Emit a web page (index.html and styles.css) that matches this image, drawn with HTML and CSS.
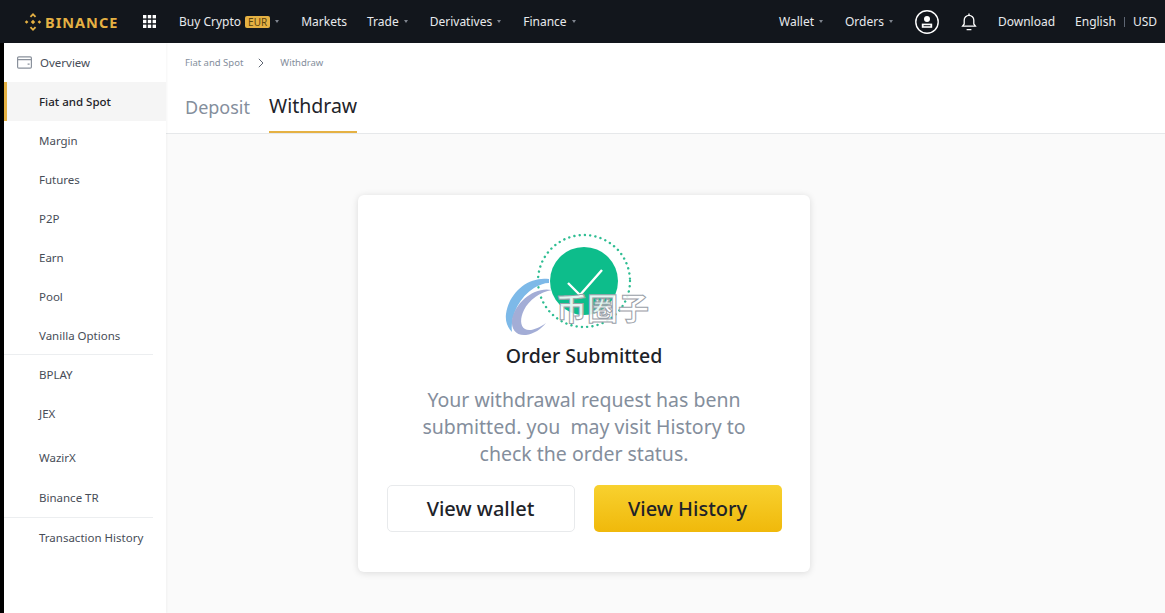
FILE: index.html
```html
<!DOCTYPE html>
<html lang="en">
<head>
<meta charset="utf-8">
<title>Binance - Withdraw</title>
<link rel="stylesheet" href="styles.css">
</head>
<body>
<header class="topbar">
  <a class="logo">
    <svg class="logo-mark" viewBox="0 0 20 20" width="20" height="20"><g fill="#e5b143"><path d="M10 1 13.2 4.2 11.9 5.5 10 3.6 8.1 5.5 6.8 4.2Z"/><path d="M10 19 13.2 15.8 11.9 14.5 10 16.4 8.1 14.5 6.8 15.8Z"/><path d="M3.6 8.2 5.4 10 3.6 11.8 1.8 10Z"/><path d="M16.4 8.2 18.2 10 16.4 11.8 14.6 10Z"/><path d="M10 7.8 12.2 10 10 12.2 7.8 10Z"/></g></svg>
    <span class="logo-text">BINANCE</span>
  </a>
  <svg class="apps" viewBox="0 0 13 13" width="13" height="13"><g fill="#fff"><rect width="3.4" height="3.4"/><rect x="4.8" width="3.4" height="3.4"/><rect x="9.6" width="3.4" height="3.4"/><rect y="4.8" width="3.4" height="3.4"/><rect x="4.8" y="4.8" width="3.4" height="3.4"/><rect x="9.6" y="4.8" width="3.4" height="3.4"/><rect y="9.6" width="3.4" height="3.4"/><rect x="4.8" y="9.6" width="3.4" height="3.4"/><rect x="9.6" y="9.6" width="3.4" height="3.4"/></g></svg>
  <nav class="nav nav-left">
    <a class="nav-item buy">Buy Crypto <span class="badge">EUR</span><i class="caret"></i></a>
    <a class="nav-item markets">Markets</a>
    <a class="nav-item trade">Trade<i class="caret"></i></a>
    <a class="nav-item derivs">Derivatives<i class="caret"></i></a>
    <a class="nav-item">Finance<i class="caret"></i></a>
  </nav>
  <nav class="nav nav-right">
    <a class="nav-item wallet">Wallet<i class="caret"></i></a>
    <a class="nav-item orders">Orders<i class="caret"></i></a>
    <svg class="user" viewBox="0 0 24 24" width="24" height="24" fill="none"><circle cx="12" cy="12" r="11.2" stroke="#fff" stroke-width="1.4"/><circle cx="12" cy="9" r="3" fill="#fff"/><path d="M6.8 13.6h10.4v4.2H6.8z" fill="#fff"/><path d="M8.6 15.2h6.8v1H8.6z" fill="#12161c"/></svg>
    <svg class="bell" viewBox="0 0 16 18" width="16" height="18" fill="none" stroke="#fff" stroke-width="1.3"><path d="M1.6 13.2h12.8l-1.6-2.2V7.2a4.8 4.8 0 0 0-9.6 0V11z"/><path d="M8 .6v1.6M5.6 16.6h4.8"/></svg>
    <a class="nav-item download">Download</a>
    <a class="nav-item lang">English</a>
    <span class="sep"></span>
    <a class="nav-item usd">USD</a>
  </nav>
</header>
<div class="shell">
  <aside class="sidebar">
    <ul class="menu">
      <li class="menu-item overview">
        <svg class="wallet-icon" viewBox="0 0 15 13" width="15" height="13" fill="none" stroke="#8a919c" stroke-width="1.2"><rect x=".6" y=".8" width="13.8" height="11.4" rx="1.2"/><path d="M.6 3.6h13.8M10.6 8.2h2"/></svg>
        Overview
      </li>
      <li class="menu-item active">Fiat and Spot</li>
      <li class="menu-item">Margin</li>
      <li class="menu-item">Futures</li>
      <li class="menu-item">P2P</li>
      <li class="menu-item">Earn</li>
      <li class="menu-item">Pool</li>
      <li class="menu-item ruled">Vanilla Options</li>
      <li class="menu-item">BPLAY</li>
      <li class="menu-item">JEX</li>
      <li class="menu-item wazirx">WazirX</li>
      <li class="menu-item ruled tr">Binance TR</li>
      <li class="menu-item tx">Transaction History</li>
    </ul>
  </aside>
  <main class="main">
    <section class="page-head">
      <div class="crumbs"><span>Fiat and Spot</span><svg class="chev" viewBox="0 0 6 10" width="6" height="10" fill="none" stroke="#5e6673" stroke-width="1"><path d="M.8.8 5 5 .8 9.2"/></svg><span>Withdraw</span></div>
      <div class="tabs">
        <a class="tab">Deposit</a>
        <a class="tab tab-on">Withdraw</a>
      </div>
    </section>
    <section class="stage">
      <div class="card">
        <div class="result-icon">
          <svg viewBox="0 0 96 96" width="96" height="96"><circle cx="48" cy="48" r="46" fill="none" stroke="#2ebd92" stroke-width="2.4" stroke-dasharray="0.1 5.2" stroke-linecap="round"/><circle cx="48" cy="48" r="34" fill="#0dbd8b"/><path d="M32 50 44 62 66 37" fill="none" stroke="#fff" stroke-width="2.4"/></svg>
        </div>
        <h2 class="card-title">Order Submitted</h2>
        <p class="card-text">Your withdrawal request has benn submitted. you&nbsp; may visit History to check the order status.</p>
        <div class="actions">
          <button class="btn btn-ghost">View wallet</button>
          <button class="btn btn-gold">View History</button>
        </div>
        <div class="watermark">
          <svg viewBox="0 0 50 58" width="50" height="58" fill="none"><path d="M44 1C24-2 4 14 1 36c-1 8 2 14 6 18-2-14 6-34 22-44 5-3 10-5 15-5z" fill="#7db9e8"/><path d="M47 12C30 8 10 24 7 42c-1 9 4 16 14 15 8-1 15-6 20-12-7 5-16 9-21 6-5-3-5-11-1-19 5-10 16-18 28-20z" fill="#a3add6"/></svg>
          <span class="wm-text">币圈子</span>
        </div>
      </div>
    </section>
  </main>
</div>
</body>
</html>
```
FILE: styles.css
```css
* { box-sizing: border-box; }
html, body { margin: 0; height: 100%; overflow: hidden; }
body {
  background: #000;
  font-family: "Noto Sans", "Noto Sans CJK SC", sans-serif;
  color: #1e2329;
  display: flex;
  flex-direction: column;
  width: 1165px;
  height: 613px;
}
ul { list-style: none; margin: 0; padding: 0; }

.topbar {
  height: 43px;
  flex: none;
  background: #12161c;
  display: flex;
  align-items: center;
  padding-left: 23px;
  padding-right: 8px;
}
.logo { display: flex; align-items: center; gap: 2px; width: 120px; }
.logo-text { font-family: "Noto Sans", sans-serif; font-weight: 700; font-size: 14.5px; letter-spacing: 1px; color: #e5b143; }
.logo-mark { flex: none; }
.apps { flex: none; }
.nav { display: flex; align-items: center; font-size: 12px; color: #e8eaed; }
.nav-left { margin-left: 23px; }
.nav-right { margin-left: auto; }
.nav-item { display: flex; align-items: center; white-space: nowrap; }
.buy { margin-right: 22px; }
.markets { margin-right: 20px; }
.trade { margin-right: 22px; }
.derivs { margin-right: 22px; }
.wallet { margin-right: 22px; }
.orders { margin-right: 22px; }
.badge {
  background: #e5b143;
  color: #5a4310;
  font-size: 10px;
  line-height: 12px;
  padding: 0 3px 0 3px;
  margin-left: 4px;
  border-radius: 2px;
}
.caret {
  display: inline-block;
  width: 0; height: 0;
  margin-left: 5px;
  border-left: 2.5px solid transparent;
  border-right: 2.5px solid transparent;
  border-top: 3px solid #7f858e;
}
.user { flex: none; margin-right: 22px; }
.bell { flex: none; margin-right: 21px; }
.download { margin-right: 20px; }
.sep { width: 1px; height: 10px; background: #5e6673; margin: 0 8px; }

.shell { flex: 1; display: flex; min-height: 0; margin-left: 4px; background: #fafafa; }
.sidebar { width: 162px; flex: none; position: relative; background: #fff; box-shadow: 1px 0 2px rgba(0,0,0,.04); }
.menu { display: flex; flex-direction: column; }
.menu-item {
  height: 39px;
  display: flex;
  align-items: center;
  padding-left: 35px;
  font-size: 11.5px;
  color: #474d57;
  position: relative;
}
.overview { padding-left: 13px; gap: 8px; }
.active { background: #f5f5f5; color: #1e2329; font-weight: 500; border-left: 3px solid #e5b143; padding-left: 32px; }
.ruled { border-bottom: 1px solid #eceef0; margin-right: 13px; }
.wazirx { height: 45px; padding-top: 3px; }
.tr { height: 40px; }
.tx { height: 39px; }

.main { flex: 1; min-width: 0; display: flex; flex-direction: column; }
.page-head { background: #fff; border-bottom: 1px solid #e6e8ea; height: 91px; padding-left: 19px; flex: none; display: flex; flex-direction: column; }
.crumbs { display: flex; align-items: center; height: 39px; font-size: 9.5px; color: #848e9c; }
.chev { margin: 0 16px 0 15px; }
.tabs { display: flex; gap: 19px; flex: 1; }
.tab { font-size: 18px; color: #848e9c; display: flex; align-items: center; height: 51px; padding-bottom: 2px; }
.tab-on { color: #1e2329; border-bottom: 2px solid #e5b143; font-size: 19.5px; }

.stage { flex: 1; display: flex; justify-content: flex-start; padding: 61px 0 0 192px; }
.card {
  width: 452px;
  height: 377px;
  background: #fff;
  border-radius: 6px;
  box-shadow: 0 1px 7px rgba(0,0,0,.13);
  display: flex;
  flex-direction: column;
  align-items: center;
  position: relative;
  padding-top: 38px;
}
.result-icon { height: 96px; flex: none; }
.result-icon svg { display: block; }
.card-title { margin: 13px 0 0; font-size: 19.5px; font-weight: 500; line-height: 27px; color: #1e2329; }
.card-text { margin: 17px 0 0; width: 340px; text-align: center; font-size: 19.5px; line-height: 27px; color: #848e9c; }
.actions { display: flex; gap: 19px; margin-top: 18px; }
.btn {
  width: 188px;
  height: 47px;
  border-radius: 5px;
  font-family: inherit;
  font-size: 20px;
  font-weight: 500;
  color: #1e2329;
  display: flex;
  align-items: center;
  justify-content: center;
}
.btn-ghost { background: #fff; border: 1px solid #e8eaec; }
.btn-gold { background: linear-gradient(#f8d12f, #f0b90b); border: 0; }

.watermark { position: absolute; left: 147px; top: 83px; display: flex; align-items: flex-start; }
.wm-text {
  font-family: "Noto Sans CJK SC", sans-serif;
  font-size: 31px;
  line-height: 36px;
  font-weight: 700;
  color: rgba(255,255,255,.9);
  -webkit-text-stroke: 1px #9aa0a8;
  margin: 11px 0 0 0;
  margin-left: 1px;
}
```
